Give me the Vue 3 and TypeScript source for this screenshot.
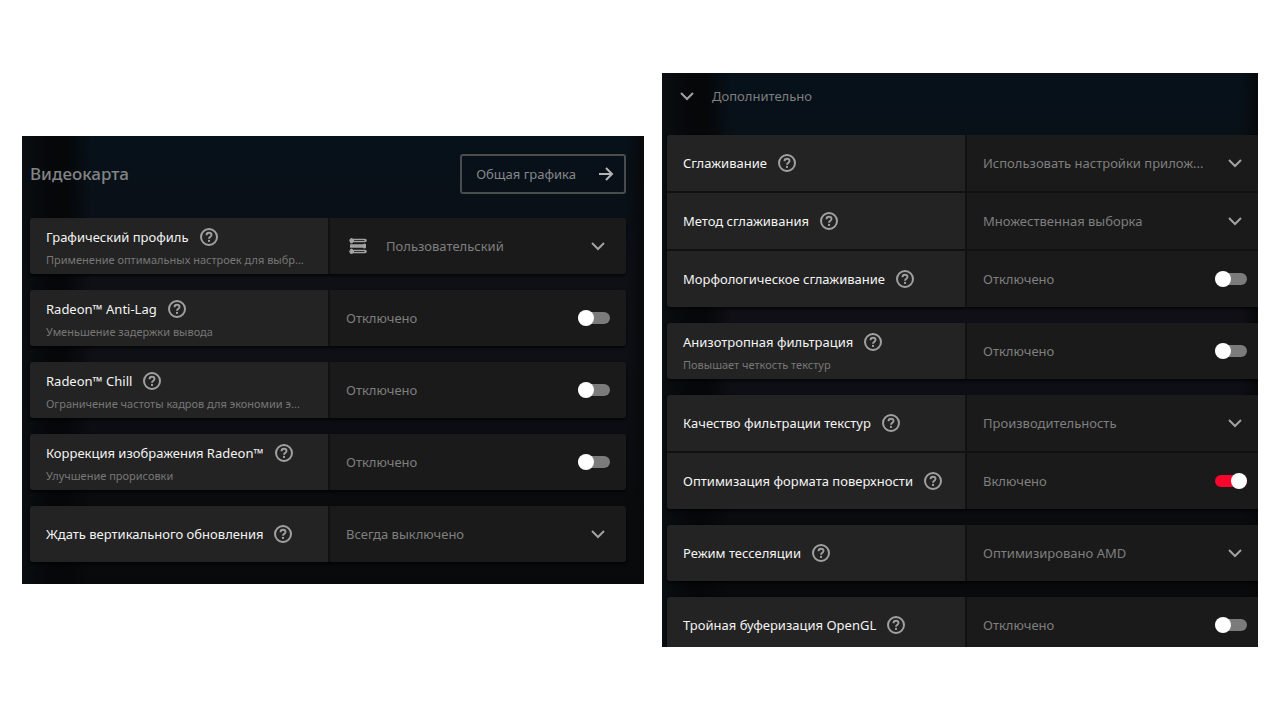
<script setup lang="ts">
import { reactive } from 'vue'

interface Setting {
  id: string
  title: string
  note?: string
  kind: 'select' | 'toggle'
  options?: string[]
  value?: string
  on?: boolean
  icon?: boolean
}

const graphics = reactive<Setting[][]>([
  [{ id: 'profile', title: 'Графический профиль', note: 'Применение оптимальных настроек для выбр...', kind: 'select', value: 'Пользовательский', options: ['Пользовательский'], icon: true }],
  [{ id: 'antilag', title: 'Radeon™ Anti-Lag', note: 'Уменьшение задержки вывода', kind: 'toggle', on: false }],
  [{ id: 'chill', title: 'Radeon™ Chill', note: 'Ограничение частоты кадров для экономии э...', kind: 'toggle', on: false }],
  [{ id: 'sharpen', title: 'Коррекция изображения Radeon™', note: 'Улучшение прорисовки', kind: 'toggle', on: false }],
  [{ id: 'vsync', title: 'Ждать вертикального обновления', kind: 'select', value: 'Всегда выключено', options: ['Всегда выключено'] }],
])

const advanced = reactive<Setting[][]>([
  [
    { id: 'aa', title: 'Сглаживание', kind: 'select', value: 'Использовать настройки прилож...', options: ['Использовать настройки прилож...'] },
    { id: 'aamethod', title: 'Метод сглаживания', kind: 'select', value: 'Множественная выборка', options: ['Множественная выборка'] },
    { id: 'morph', title: 'Морфологическое сглаживание', kind: 'toggle', on: false },
  ],
  [{ id: 'aniso', title: 'Анизотропная фильтрация', note: 'Повышает четкость текстур', kind: 'toggle', on: false }],
  [
    { id: 'texture', title: 'Качество фильтрации текстур', kind: 'select', value: 'Производительность', options: ['Производительность'] },
    { id: 'surface', title: 'Оптимизация формата поверхности', kind: 'toggle', on: true },
  ],
  [{ id: 'tess', title: 'Режим тесселяции', kind: 'select', value: 'Оптимизировано AMD', options: ['Оптимизировано AMD'] }],
  [{ id: 'triple', title: 'Тройная буферизация OpenGL', kind: 'toggle', on: false }],
])

const panels = [
  { name: 'main', groups: graphics },
  { name: 'advanced', groups: advanced },
]
</script>

<template>
  <main class="page">
    <section v-for="panel in panels" :key="panel.name" class="panel" :class="panel.name">
      <header v-if="panel.name === 'main'" class="head">
        <h1>Видеокарта</h1>
        <button type="button" class="global">
          Общая графика
          <svg width="16" height="16" viewBox="0 0 16 16" aria-hidden="true">
            <path d="M1 8H13.5M8 2L14 8L8 14" fill="none" stroke="currentColor" stroke-width="2" />
          </svg>
        </button>
      </header>
      <header v-else class="head">
        <button type="button" class="expander" aria-expanded="true">
          <svg width="14" height="10" viewBox="0 0 14 10" aria-hidden="true">
            <path d="M1 2L7 8L13 2" fill="none" stroke="currentColor" stroke-width="2" />
          </svg>
          Дополнительно
        </button>
      </header>

      <div class="list">
        <div v-for="(group, g) in panel.groups" :key="g" class="group">
          <div v-for="s in group" :key="s.id" class="row">
            <div class="name" :class="{ noted: s.note }">
              <div class="title">
                <label :for="s.id">{{ s.title }}</label>
                <button type="button" class="help" :aria-label="'Справка: ' + s.title">
                  <svg width="18" height="18" viewBox="0 0 18 18" aria-hidden="true">
                    <circle cx="9" cy="9" r="8" fill="none" stroke="currentColor" stroke-width="2" />
                    <path d="M6.5 7.2C6.5 5.6 7.6 4.7 9 4.7S11.5 5.6 11.5 7C11.5 8.7 9 8.8 9 10.8" fill="none" stroke="currentColor" stroke-width="1.9" />
                    <rect x="8" y="11.9" width="2" height="2" fill="currentColor" />
                  </svg>
                </button>
              </div>
              <p v-if="s.note" class="note">{{ s.note }}</p>
            </div>

            <div v-if="s.kind === 'select'" class="value picker" :class="{ iconic: s.icon }">
              <svg v-if="s.icon" class="sliders" width="18" height="16" viewBox="0 0 18 16" aria-hidden="true">
                <path d="M2 2.5H16M2 13.5H16" stroke="currentColor" stroke-width="3.6" stroke-linecap="round" />
                <path d="M5 2.5H15.5M5 13.5H15.5" stroke="#333" stroke-width="1" />
                <path d="M1 8H17" stroke="currentColor" stroke-width="3.6" />
                <path d="M2.5 1.5V4M2.5 12V14.5M15.5 7V9" stroke="currentColor" stroke-width="3" stroke-linecap="round" />
              </svg>
              <select :id="s.id" v-model="s.value">
                <option v-for="o in s.options" :key="o">{{ o }}</option>
              </select>
              <svg class="chevron" width="14" height="10" viewBox="0 0 14 10" aria-hidden="true">
                <path d="M1 2L7 8L13 2" fill="none" stroke="currentColor" stroke-width="2" />
              </svg>
            </div>
            <div v-else class="value">
              <span>{{ s.on ? 'Включено' : 'Отключено' }}</span>
              <input :id="s.id" v-model="s.on" type="checkbox" class="switch" />
            </div>
          </div>
        </div>
      </div>
    </section>
  </main>
</template>

<style>
body {
  margin: 0;
  background: #fff;
}
</style>

<style scoped>
.page {
  min-height: 100vh;
  box-sizing: border-box;
  padding: 0 22px;
  display: grid;
  grid-template-columns: 622fr 596fr;
  gap: 18px;
  align-items: center;
  font-family: "Noto Sans", "Open Sans", sans-serif;
  font-size: 13px;
  line-height: 20px;
  color: #7f7f7f;
}

button,
select {
  font: inherit;
  color: inherit;
  background: none;
  border: 0;
  padding: 0;
  margin: 0;
}

.panel {
  min-width: 0;
  overflow: hidden;
  background:
    linear-gradient(90deg, #0a0e12 0, #050709 30px, #050709 44px, transparent 70px, transparent 97%, #07090b 100%),
    linear-gradient(180deg, #06111a 0, #0a1017 18%, #101016 40%, #0d0e15 60%, #0a0b0d 80%, #07090a 100%);
}

.main {
  padding: 0 18px 22px 8px;
}

.advanced {
  padding-left: 5px;
}

.head {
  display: flex;
  align-items: center;
  justify-content: space-between;
}

.main .head {
  padding: 18px 0 24px;
}

.advanced .head {
  padding: 12px 13px 28px;
}

h1 {
  margin: 0;
  font-size: 17px;
  font-weight: 500;
  line-height: 24px;
  color: #828486;
}

.global {
  box-sizing: border-box;
  height: 40px;
  padding: 0 10px 0 14px;
  border: 2px solid #4a4c4e;
  border-radius: 3px;
  display: flex;
  align-items: center;
  gap: 22px;
  color: #85878a;
}

.global svg {
  color: #b4b4b4;
}

.expander {
  display: flex;
  align-items: center;
  gap: 18px;
  height: 22px;
}

.expander svg,
.chevron {
  color: #a2a2a2;
}

.list {
  display: flex;
  flex-direction: column;
  gap: 16px;
}

.advanced .list {
  margin-bottom: -6px;
  width: calc(100% + 5px);
}

.group {
  display: flex;
  flex-direction: column;
  gap: 2px;
  background: #111;
  border-radius: 3px;
  overflow: hidden;
  box-shadow: 0 2px 3px #000a;
}

.row {
  display: flex;
  gap: 2px;
  height: 56px;
}

.name {
  box-sizing: border-box;
  flex: 0 0 50%;
  min-width: 0;
  padding: 0 16px;
  display: flex;
  flex-direction: column;
  justify-content: center;
  background: #232323;
}

.noted {
  justify-content: space-between;
  padding: 9px 16px 6px;
}

.title {
  display: flex;
  align-items: center;
  gap: 11px;
  color: #f4f4f4;
  white-space: nowrap;
}

.help {
  display: flex;
  color: #a0a0a0;
}

.note {
  margin: 0;
  font-size: 11px;
  line-height: 16px;
  color: #777;
  white-space: nowrap;
}

.value {
  box-sizing: border-box;
  flex: 1;
  min-width: 0;
  padding: 0 16px;
  display: flex;
  align-items: center;
  justify-content: space-between;
  background: #1a1a1a;
}

.picker {
  padding: 0;
  display: grid;
  grid-template-columns: 1fr;
}

.picker > * {
  grid-area: 1 / 1;
}

.picker select {
  appearance: none;
  width: 100%;
  height: 56px;
  padding: 0 48px 0 16px;
  text-overflow: ellipsis;
}

.picker.iconic select {
  padding-left: 56px;
}

.chevron {
  justify-self: end;
  margin-right: 21px;
  pointer-events: none;
}

.sliders {
  margin-left: 19px;
  color: #a2a2a2;
  pointer-events: none;
}

.switch {
  appearance: none;
  margin: 0;
  width: 32px;
  height: 16px;
  display: flex;
  align-items: center;
  position: relative;
}

.switch::before {
  content: "";
  width: 32px;
  height: 12px;
  border-radius: 6px;
  background: #7b7b7b;
}

.switch::after {
  content: "";
  position: absolute;
  left: 0;
  width: 16px;
  height: 16px;
  border-radius: 50%;
  background: #fff;
}

.switch:checked::before {
  background: #f9062f;
}

.switch:checked::after {
  left: auto;
  right: 0;
}
</style>
